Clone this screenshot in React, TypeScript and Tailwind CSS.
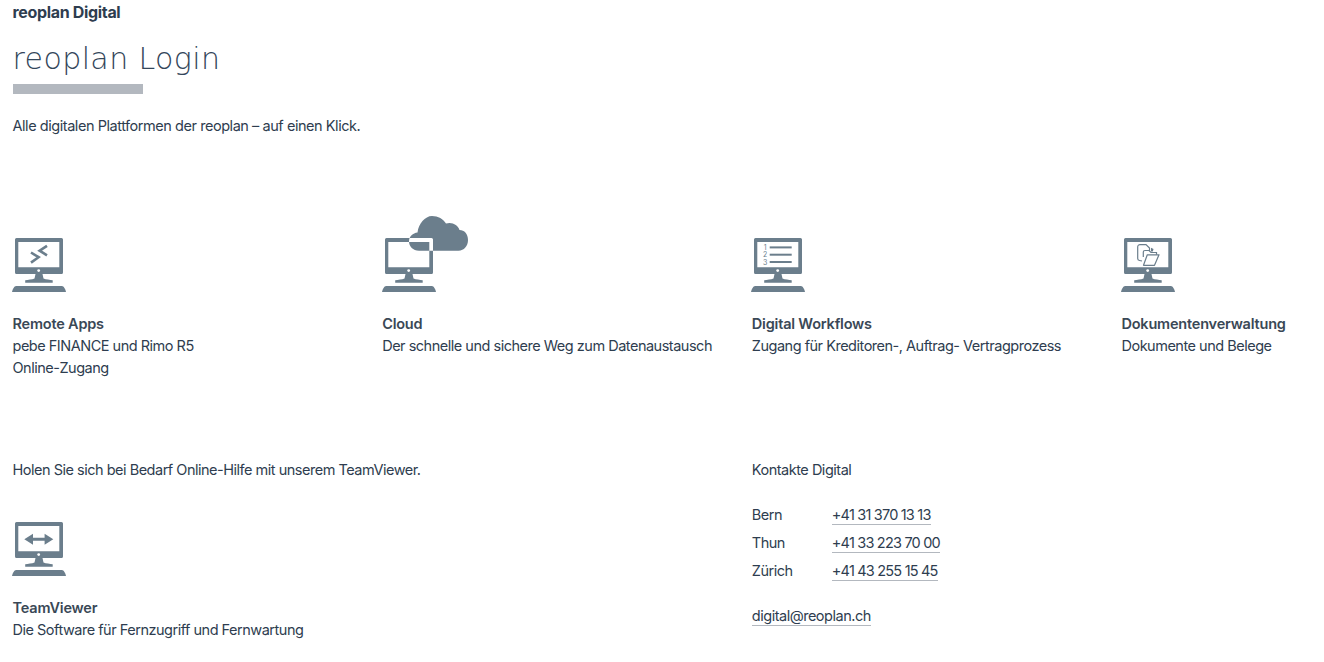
import React from "react";

const SLATE = "#6b7e8c";

const FRAME =
  "M4.500 0H49.500A1.500 1.500 0 0 1 51 1.500V34.500A1.500 1.500 0 0 1 49.500 36H4.500A1.500 1.500 0 0 1 3 34.500V1.500A1.500 1.500 0 0 1 4.500 0ZM6.300 4V29.300H47.300V4Z";
const CLOUD =
  "M37 12.700C31 12.700 27 8.500 27 3.500C27 -1.500 31 -5 35.500 -5.500C36.500 -14 43 -22 50 -22C56 -22 61.500 -19 64 -14.500C70 -16.500 76 -13 77.500 -8C82.500 -8 86 -4 86 2C86 8 82 12.700 76.500 12.700Z";

function Stand() {
  return (
    <>
      <circle cx="26.700" cy="32.600" r="1.400" fill="#fff" />
      <path fill={SLATE} d="M23.500 36H30.500L31.500 40.500C34 41.500 38 41.800 40.700 42.300V44.800H13.200V42.300C16 41.800 20 41.500 22.500 40.500Z" />
      <path fill={SLATE} d="M4 48H50C51.500 48 53.500 51 54 54H0C0.500 51 2.500 48 4 48Z" />
    </>
  );
}

function Monitor({ children }: { children?: React.ReactNode }) {
  return (
    <svg width="90" height="78" viewBox="0 -22 90 78" className="block -mt-[22px] -ml-[0.5px]" aria-hidden="true">
      <path fillRule="evenodd" fill={SLATE} d={FRAME} />
      <Stand />
      {children}
    </svg>
  );
}

function RemoteIcon() {
  return (
    <Monitor>
      <path fill="none" stroke={SLATE} strokeWidth="2.600" d="M35 7.800L27.600 12.700L35 17.300" />
      <path fill="none" stroke={SLATE} strokeWidth="2.600" d="M19 14.500L26.600 19.200L19 24.600" />
    </Monitor>
  );
}

function CloudIcon() {
  return (
    <svg width="90" height="78" viewBox="0 -22 90 78" className="block -mt-[22px] -ml-[0.5px]" aria-hidden="true">
      <path fillRule="evenodd" fill={SLATE} d={FRAME + CLOUD} />
      <Stand />
    </svg>
  );
}

function ListIcon() {
  return (
    <Monitor>
      <rect x="18.700" y="8.400" width="22" height="2" fill={SLATE} />
      <rect x="18.700" y="15.700" width="22" height="2" fill={SLATE} />
      <rect x="18.700" y="23" width="22" height="2" fill={SLATE} />
      <g fill={SLATE} fontSize="7" textAnchor="middle" style={{ fontFamily: "Inter, sans-serif" }}>
        <text x="14" y="12">1</text>
        <text x="14" y="19.300">2</text>
        <text x="14" y="26.600">3</text>
      </g>
    </Monitor>
  );
}

function DocsIcon() {
  return (
    <Monitor>
      <path
        fill="none"
        stroke={SLATE}
        strokeWidth="1.200"
        d="M21 23L18.500 22.500C17.300 22.300 16.700 21.500 16.700 20.500V9C16.700 7.300 18 6.600 19 6.600H25L28.500 10V13"
      />
      <path fill="none" stroke={SLATE} strokeWidth="1.200" d="M22.300 19V14C22.300 13 23 12.500 24 12.500H28L30 14.500H35.500V17" />
      <path fill="#fff" stroke={SLATE} strokeWidth="1.200" strokeLinejoin="round" d="M22.500 27.300H33.500L38 16.800H26.300Z" />
      <path fill={SLATE} d="M30 9.700L32.500 11L31.800 13.500H30Z" />
    </Monitor>
  );
}

function ArrowsIcon() {
  return (
    <Monitor>
      <path fill={SLATE} d="M12.300 17.300L21 11.800V15.800H32.600V11.800L41.300 17.300L32.600 22.800V18.800H21V22.800Z" />
    </Monitor>
  );
}

function Item({ icon, title, lines }: { icon: React.ReactNode; title: string; lines: string[] }) {
  return (
    <div className="flex flex-col">
      <div className="h-[54px]">{icon}</div>
      <div className="mt-[21px] font-semibold tracking-[-0.2px] text-[#3a4856]">{title}</div>
      {lines.map((l) => (
        <div key={l}>{l}</div>
      ))}
    </div>
  );
}

function Phone({ city, num }: { city: string; num: string }) {
  return (
    <div className="flex h-[28px] items-start">
      <span className="w-[80px]">{city}</span>
      <span className="border-b border-[#b3b8bf] h-[21px] leading-[21px] tracking-[-0.8px]">{num}</span>
    </div>
  );
}

export default function App() {
  return (
    <div
      className="w-[1324px] h-[662px] overflow-hidden bg-white text-[#2e3d4f] text-[14.5px] leading-[22px] tracking-[-0.49px] pl-[12.5px] pt-[1px]"
      style={{ fontFamily: "Inter, 'Liberation Sans', sans-serif" }}
    >
      <div className="font-bold text-[16px] tracking-[-0.33px] h-[22px]">reoplan Digital</div>
      <h1
        className="mt-[16px] h-[38px] text-[30px] leading-[40px] font-extralight tracking-[0.4px] text-[#33465a]"
        style={{ fontFamily: "'DejaVu Sans', sans-serif" }}
      >
        reoplan Login
      </h1>
      <div className="mt-[7px] ml-[0.5px] w-[130px] h-[10px] bg-[#b3b8bf]" />
      <p className="mt-[21px] tracking-[-0.45px]">Alle digitalen Plattformen der reoplan – auf einen Klick.</p>

      <div className="mt-[101px] grid grid-cols-[369.67px_369.67px_369.67px_369.67px] h-[221px]">
        <Item icon={<RemoteIcon />} title="Remote Apps" lines={["pebe FINANCE und Rimo R5", "Online-Zugang"]} />
        <Item icon={<CloudIcon />} title="Cloud" lines={["Der schnelle und sichere Weg zum Datenaustausch"]} />
        <Item icon={<ListIcon />} title="Digital Workflows" lines={["Zugang für Kreditoren-, Auftrag- Vertragprozess"]} />
        <Item icon={<DocsIcon />} title="Dokumentenverwaltung" lines={["Dokumente und Belege"]} />
      </div>

      <div className="grid grid-cols-[739.33px_369.67px]">
        <div>
          <p>Holen Sie sich bei Bedarf Online-Hilfe mit unserem TeamViewer.</p>
          <div className="mt-[41px]">
            <Item icon={<ArrowsIcon />} title="TeamViewer" lines={["Die Software für Fernzugriff und Fernwartung"]} />
          </div>
        </div>
        <div>
          <p>Kontakte Digital</p>
          <div className="mt-[23px]">
            <Phone city="Bern" num="+41 31 370 13 13" />
            <Phone city="Thun" num="+41 33 223 70 00" />
            <Phone city="Zürich" num="+41 43 255 15 45" />
          </div>
          <div className="mt-[17px]">
            <span className="inline-block h-[21px] leading-[21px] border-b border-[#b3b8bf]">digital@reoplan.ch</span>
          </div>
        </div>
      </div>
    </div>
  );
}
